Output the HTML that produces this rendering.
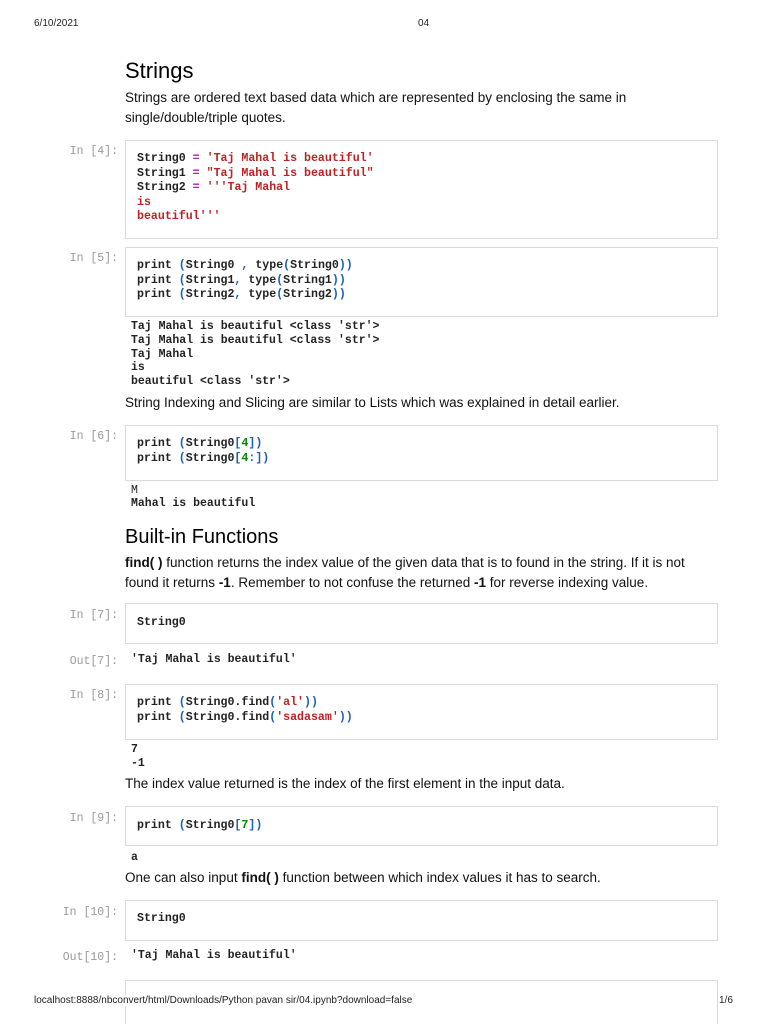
<!DOCTYPE html>
<html><head><meta charset="utf-8"><style>
html,body{margin:0;width:768px;height:1024px;overflow:hidden}
body{background:#fff;position:relative;font-family:"Liberation Sans",sans-serif;color:#000}
.a{position:absolute;white-space:pre}
.hd{font-size:10px;color:#222}
.t{font-size:13.5px;line-height:20px;color:#111}
.box{position:absolute;left:125px;width:591px;border:1px solid #d9d9d9;background:#fff}
.c{position:absolute;left:137px;font-family:"Liberation Mono",monospace;font-size:11.6px;line-height:14.5px;font-weight:bold;color:#222;white-space:pre}
.o{position:absolute;left:131px;font-family:"Liberation Mono",monospace;font-size:11.5px;line-height:13.8px;font-weight:bold;color:#222;white-space:pre}
.p{position:absolute;font-family:"Liberation Mono",monospace;font-size:11.5px;color:#999;white-space:pre;text-align:right;width:60px}
.s{color:#b22}.b{color:#1a5fb4}.g{color:#080}.m{color:#a2a}
h1{position:absolute;margin:0;font-weight:normal}
</style></head><body>
<div class="a hd" style="left:34px;top:18px">6/10/2021</div>
<div class="a hd" style="left:418px;top:18px">04</div>
<h1 style="left:125px;top:58px;font-size:22px">Strings</h1>
<div class="a t" style="left:125px;top:88px">Strings are ordered text based data which are represented by enclosing the same in
single/double/triple quotes.</div>

<div class="p" style="left:58px;top:145px">In [4]:</div>
<div class="box" style="top:140px;height:97px"></div>
<div class="c" style="top:152px">String0 <span class="m">=</span> <span class="s">'Taj Mahal is beautiful'</span>
String1 <span class="m">=</span> <span class="s">"Taj Mahal is beautiful"</span>
String2 <span class="m">=</span> <span class="s">'''Taj Mahal
is
beautiful'''</span></div>

<div class="p" style="left:58px;top:252px">In [5]:</div>
<div class="box" style="top:247px;height:68px"></div>
<div class="c" style="top:259px">print <span class="b">(</span>String0 <span class="b">,</span> type<span class="b">(</span>String0<span class="b">))</span>
print <span class="b">(</span>String1<span class="b">,</span> type<span class="b">(</span>String1<span class="b">))</span>
print <span class="b">(</span>String2<span class="b">,</span> type<span class="b">(</span>String2<span class="b">))</span></div>
<div class="o" style="top:320px">Taj Mahal is beautiful &lt;class 'str'&gt;
Taj Mahal is beautiful &lt;class 'str'&gt;
Taj Mahal
is
beautiful &lt;class 'str'&gt;</div>
<div class="a t" style="left:125px;top:393px">String Indexing and Slicing are similar to Lists which was explained in detail earlier.</div>

<div class="p" style="left:58px;top:430px">In [6]:</div>
<div class="box" style="top:425px;height:54px"></div>
<div class="c" style="top:437px">print <span class="b">(</span>String0<span class="b">[</span><span class="g">4</span><span class="b">])</span>
print <span class="b">(</span>String0<span class="b">[</span><span class="g">4</span><span class="b">:])</span></div>
<div class="o" style="top:484px;font-weight:normal">M</div>
<div class="o" style="top:497px">Mahal is beautiful</div>

<h1 style="left:125px;top:526px;font-size:20px">Built-in Functions</h1>
<div class="a t" style="left:125px;top:553px"><b>find( )</b> function returns the index value of the given data that is to found in the string. If it is not
found it returns <b>-1</b>. Remember to not confuse the returned <b>-1</b> for reverse indexing value.</div>

<div class="p" style="left:58px;top:609px">In [7]:</div>
<div class="box" style="top:603px;height:39px"></div>
<div class="c" style="top:616px">String0</div>
<div class="p" style="left:58px;top:655px">Out[7]:</div>
<div class="o" style="top:653px">'Taj Mahal is beautiful'</div>

<div class="p" style="left:58px;top:689px">In [8]:</div>
<div class="box" style="top:684px;height:54px"></div>
<div class="c" style="top:696px">print <span class="b">(</span>String0.find<span class="b">(</span><span class="s">'al'</span><span class="b">))</span>
print <span class="b">(</span>String0.find<span class="b">(</span><span class="s">'sadasam'</span><span class="b">))</span></div>
<div class="o" style="top:743px">7
-1</div>
<div class="a t" style="left:125px;top:774px">The index value returned is the index of the first element in the input data.</div>

<div class="p" style="left:58px;top:812px">In [9]:</div>
<div class="box" style="top:806px;height:38px"></div>
<div class="c" style="top:819px">print <span class="b">(</span>String0<span class="b">[</span><span class="g">7</span><span class="b">])</span></div>
<div class="o" style="top:851px">a</div>
<div class="a t" style="left:125px;top:868px">One can also input <b>find( )</b> function between which index values it has to search.</div>

<div class="p" style="left:58px;top:906px">In [10]:</div>
<div class="box" style="top:900px;height:39px"></div>
<div class="c" style="top:912px">String0</div>
<div class="p" style="left:58px;top:951px">Out[10]:</div>
<div class="o" style="top:949px">'Taj Mahal is beautiful'</div>
<div class="box" style="top:980px;height:60px"></div>

<div class="a hd" style="left:34px;top:995px;background:#fff">localhost:8888/nbconvert/html/Downloads/Python pavan sir/04.ipynb?download=false</div>
<div class="a hd" style="left:719px;top:995px;background:#fff">1/6</div>
</body></html>
